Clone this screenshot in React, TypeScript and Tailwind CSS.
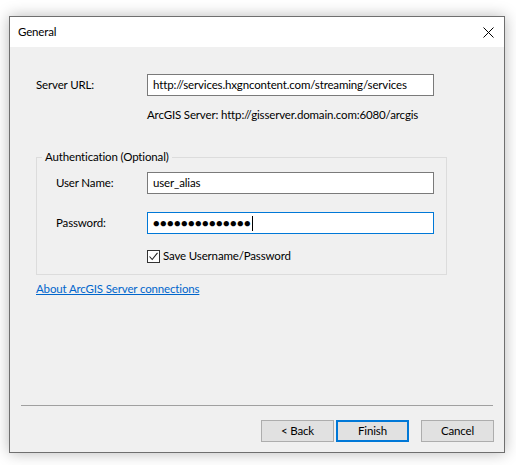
import React from "react";

const font = { fontFamily: 'Lato, "Noto Sans", sans-serif' };

function Field({ value, focused }: { value: React.ReactNode; focused?: boolean }) {
  return (
    <div
      className={`flex h-[22px] w-[287px] items-center bg-white pl-[5px] ${
        focused ? "border border-[#0078d7]" : "border border-[#7a7a7a]"
      }`}
    >
      {value}
    </div>
  );
}

function Btn({ label, primary }: { label: string; primary?: boolean }) {
  return (
    <div
      className={`flex h-[22px] w-[73px] items-center justify-center bg-[#e1e1e1] ${
        primary ? "border-2 border-[#0078d7]" : "border border-[#adadad]"
      }`}
    >
      {label}
    </div>
  );
}

export default function App() {
  return (
    <div
      className="h-[465px] w-[516px] bg-white pl-[9px] pt-[16px] text-[11.5px] leading-[16px] tracking-[-0.15px] text-black"
      style={font}
    >
      <div className="flex h-[437px] w-[496px] flex-col border border-[#6f6f6f] bg-[#f0f0f0] shadow-[0_0_14px_rgba(0,0,0,0.28)]">
        {/* title bar */}
        <div className="flex h-[30px] items-center justify-between bg-white pl-[8px] pr-[9px]">
          <span>General</span>
          <svg width="11" height="11" viewBox="0 0 11 11" className="mr-[1px]">
            <path d="M0.5 0.5 L10.5 10.5 M10.5 0.5 L0.5 10.5" stroke="#000" strokeWidth="1" />
          </svg>
        </div>

        {/* body */}
        <div className="flex flex-1 flex-col pl-[26px]">
          <div className="mt-[27px] flex h-[22px] items-center">
            <span className="w-[111px]">Server URL:</span>
            <Field value="http://services.hxgncontent.com/streaming/services" />
          </div>
          <div className="mt-[11px] pl-[111px]">ArcGIS Server: http://gisserver.domain.com:6080/arcgis</div>

          <fieldset className="mt-[26px] w-[411px] border border-[#dcdcdc] pb-[10px] pl-[5px]">
            <legend className="px-[3px]">Authentication (Optional)</legend>
            <div className="mt-[7px] flex h-[22px] items-center">
              <span className="w-[105px] pl-[14px]">User Name:</span>
              <Field value="user_alias" />
            </div>
            <div className="mt-[18px] flex h-[22px] items-center">
              <span className="w-[105px] pl-[14px]">Password:</span>
              <Field
                focused
                value={
                  <span className="flex items-center">
                    <span className="text-[11px] tracking-[0.4px]">●●●●●●●●●●●●●●</span>
                    <span className="ml-[1px] h-[15px] w-[1px] bg-black" />
                  </span>
                }
              />
            </div>
            <div className="mt-[14px] flex h-[16px] items-center pl-[105px]">
              <span className="flex h-[13px] w-[13px] items-center justify-center border border-[#333] bg-white">
                <svg width="11" height="11" viewBox="0 0 11 11">
                  <path d="M1.5 5.5 L4.2 8.5 L9.5 1.8" fill="none" stroke="#222" strokeWidth="1.1" />
                </svg>
              </span>
              <span className="ml-[3px]">Save Username/Password</span>
            </div>
          </fieldset>

          <a className="mt-[6px] w-fit text-[#0066cc] underline">About ArcGIS Server connections</a>
        </div>

        {/* footer */}
        <div className="mx-[11px] h-[1px] bg-[#a0a0a0]" />
        <div className="mb-[10px] mt-[14px] flex justify-end pr-[10px]">
          <Btn label="< Back" />
          <div className="ml-[2px]">
            <Btn label="Finish" primary />
          </div>
          <div className="ml-[12px]">
            <Btn label="Cancel" />
          </div>
        </div>
      </div>
    </div>
  );
}
